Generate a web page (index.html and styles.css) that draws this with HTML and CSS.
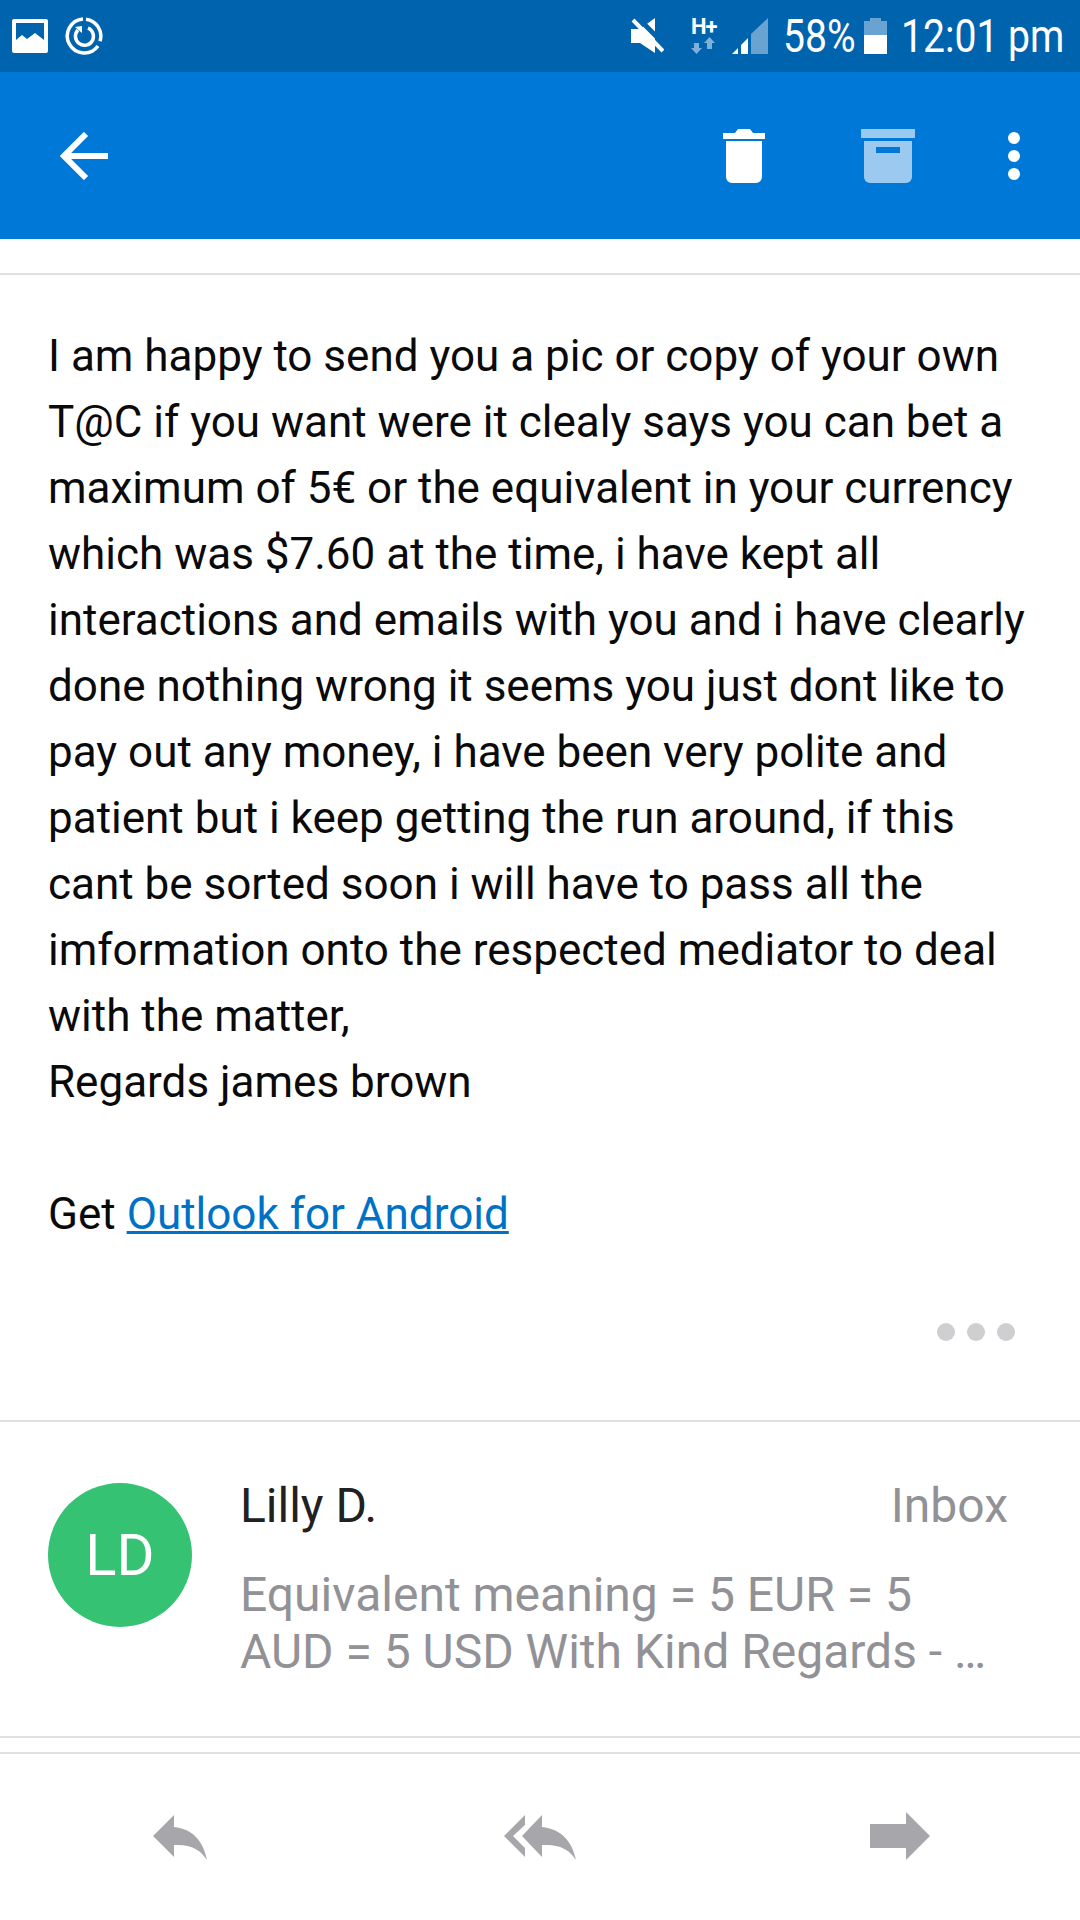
FILE: index.html
```html
<!doctype html>
<html>
<head>
<meta charset="utf-8">
<title>Outlook message</title>
<link rel="stylesheet" href="styles.css">
</head>
<body>
<div class="phone">
	<div class="status">
		<svg class="ic-pic" viewBox="0 0 36 34" width="36" height="34"><path fill="#fff" fill-rule="evenodd" d="M2 0h32a2 2 0 0 1 2 2v30a2 2 0 0 1-2 2H2a2 2 0 0 1-2-2V2a2 2 0 0 1 2-2zM4 4v17l6-5 5 4 8-6 9 7V4z"/></svg>
		<svg class="ic-sync" viewBox="0 0 38 38" width="38" height="38"><path fill="none" stroke="#fff" stroke-width="3.500" d="M18 2a17 17 0 1 0 15 27"/><path fill="none" stroke="#fff" stroke-width="3.500" d="M21 2.200a17 17 0 0 1 14 22"/><path fill="none" stroke="#fff" stroke-width="3.500" d="M23 11a9 9 0 1 1-10 2"/><path fill="#fff" d="M10 10l7-1 0 7z"/></svg>
		<span class="status-gap"></span>
		<svg class="ic-mute" viewBox="0 0 33 36" width="33" height="36"><path fill="#fff" d="M0 11h9L24 0v35L9 25H0z"/><path stroke="#0063ae" stroke-width="5" d="M5 -2l32 32"/><path stroke="#fff" stroke-width="4" d="M2 2l30 31"/></svg>
		<div class="net">
			<span class="net-text">H+</span>
			<svg viewBox="0 0 24 17" width="24" height="17"><path fill="#7fb0d8" d="M3 6h5v5h3l-5.500 6L0 11h3zM16 12V6h-3l5.500-6L24 6h-3v6z"/></svg>
		</div>
		<svg class="ic-signal" viewBox="0 0 36 36" width="36" height="36"><path fill="#69a3d2" d="M19 16L36 0v36H19z"/><path fill="#fff" d="M0 36l6-6v6zM9 27l7-7v16H9z"/></svg>
		<span class="batt-pct"><span>58%</span></span>
		<svg class="ic-batt" viewBox="0 0 23 36" width="23" height="36"><path fill="#69a3d2" d="M6 0h11v3h6v15H0V3h6z"/><path fill="#fff" d="M0 17h23v19H0z"/></svg>
		<span class="clock"><span>12:01 pm</span></span>
	</div>
	<div class="bar">
		<svg class="ic-back" viewBox="0 0 48 48" width="48" height="48"><path fill="none" stroke="#fff" stroke-width="6" d="M48 24H4M26 2L4 24l22 22"/></svg>
		<span class="bar-gap"></span>
		<svg class="ic-del" viewBox="0 0 42 54" width="42" height="54"><path fill="#fff" d="M0 4h12l3-4h12l3 4h12v6H0zM3 12h36v36a6 6 0 0 1-6 6H9a6 6 0 0 1-6-6z"/></svg>
		<svg class="ic-arch" viewBox="0 0 54 54" width="54" height="54"><path fill="#9cc9f0" fill-rule="evenodd" d="M0 0h54v9H0zM3 12h48v36a6 6 0 0 1-6 6H9a6 6 0 0 1-6-6zM15 18v6h24v-6z"/></svg>
		<div class="more"><i></i><i></i><i></i></div>
	</div>
	<div class="rule rule-top"></div>
	<div class="mail">
		I am happy to send you a pic or copy of your own<br>
		T@C if you want were it clealy says you can bet a<br>
		maximum of 5€ or the equivalent in your currency<br>
		which was $7.60 at the time, i have kept all<br>
		interactions and emails with you and i have clearly<br>
		done nothing wrong it seems you just dont like to<br>
		pay out any money, i have been very polite and<br>
		patient but i keep getting the run around, if this<br>
		cant be sorted soon i will have to pass all the<br>
		imformation onto the respected mediator to deal<br>
		with the matter,<br>
		Regards james brown<br>
		<br>
		Get <a href="#">Outlook for Android</a>
	</div>
	<div class="quoted"><i></i><i></i><i></i></div>
	<div class="rule"></div>
	<div class="thread">
		<div class="avatar">LD</div>
		<div class="thread-main">
			<div class="thread-head">
				<span class="sender">Lilly D.</span>
				<span class="folder">Inbox</span>
			</div>
			<div class="preview">Equivalent meaning = 5 EUR = 5<br>AUD = 5 USD With Kind Regards - …</div>
		</div>
	</div>
	<div class="rule"></div>
	<div class="rule rule-last"></div>
	<div class="actions">
		<svg class="ic-reply" viewBox="0 0 54 45" width="54" height="45"><path fill="#a7a6aa" d="M0 21L21 0v12C40 14 50 26 54 45 48 36 40 29 21 30v12z"/></svg>
		<svg class="ic-replyall" viewBox="0 0 72 45" width="72" height="45"><path fill="#a7a6aa" d="M18 21L38 0v12C57 14 68 26 72 45 66 36 58 29 38 30v12z"/><path fill="#a7a6aa" d="M0 21L21 0v10L9 21l12 12v9z"/></svg>
		<svg class="ic-fwd" viewBox="0 0 60 48" width="60" height="48"><path fill="#a7a6aa" d="M0 12h36V0l24 24-24 24V36H0z"/></svg>
	</div>
</div>
</body>
</html>
```

FILE: styles.css
```css
*{margin:0; padding:0; box-sizing:border-box;}
body{background:#fff; font-family:Roboto, sans-serif; width:1080px; height:1920px; overflow:hidden;}
.phone{width:1080px; height:1920px; display:flex; flex-direction:column;}
svg{display:block; flex:none;}

.status{height:72px; background:#0063ae; display:flex; align-items:center; padding:0 17px 0 12px; color:#fff;}
.ic-sync{margin-left:17px;}
.status-gap,.bar-gap{flex:1;}
.net{width:26px; height:36px; margin-left:27px; display:flex; flex-direction:column; justify-content:space-between;}
.net-text{font-size:22px; font-weight:700; line-height:18px; letter-spacing:-1px; white-space:nowrap;}
.ic-signal{margin-left:15px;}
.batt-pct{font-size:46px; margin-left:15px; width:72px; white-space:nowrap;}
.batt-pct span,.clock span{display:inline-block; transform-origin:left center; transform:scaleX(.85);}
.ic-batt{margin-left:9px;}
.clock{font-size:46px; margin-left:14px; width:162px; white-space:nowrap;}

.bar{height:167px; background:#0078d7; display:flex; align-items:center; padding:0 60px;}
.ic-del{margin-right:96px;}
.ic-arch{margin-right:93px;}
.more{display:flex; flex-direction:column; gap:6px;}
.more i{display:block; width:12px; height:12px; border-radius:50%; background:#fff;}

.rule{height:2px; background:#e0e0e0; flex:none;}
.rule-top{margin-top:34px;}
.rule-last{margin-top:14px;}

.mail{padding:48px 0 0 48px; font-size:44px; line-height:66px; color:#0a0a0a; white-space:nowrap;}
.mail a{color:#0072c6; text-decoration:underline; text-decoration-thickness:3px;}

.quoted{display:flex; justify-content:flex-end; gap:12px; padding:76px 65px 0 0; height:173px;}
.quoted i{display:block; width:18px; height:18px; border-radius:50%; background:#cfcfd1;}

.thread{height:314px; display:flex; padding:61px 72px 0 48px;}
.avatar{width:144px; height:144px; border-radius:50%; background:#35c272; color:#fff; font-size:58px; display:flex; align-items:center; justify-content:center; flex:none;}
.thread-main{flex:1; margin-left:48px;}
.thread-head{display:flex; justify-content:space-between; font-size:48px; line-height:52px; margin-top:-3px;}
.sender{color:#212121;}
.folder{color:#929196;}
.preview{margin-top:34px; font-size:48px; line-height:57px; color:#929196; white-space:nowrap;}

.actions{flex:1; display:flex; align-items:flex-start; padding:61px 0 0 153px;}
.ic-replyall{margin-left:297px;}
.ic-fwd{margin-left:294px; margin-top:-3px;}
```
